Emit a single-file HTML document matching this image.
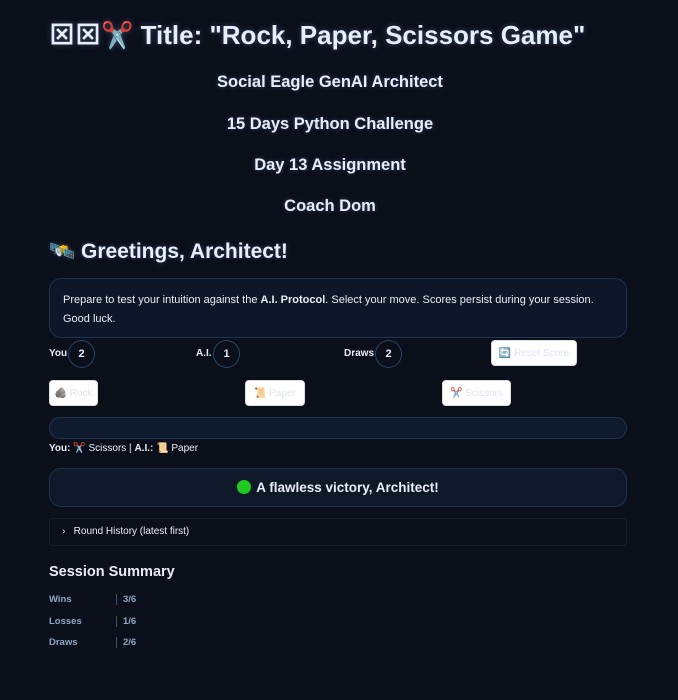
<!DOCTYPE html>
<html><head><meta charset="utf-8"><style>
*{margin:0;padding:0;box-sizing:border-box}
body{width:678px;height:700px;background:#0b0f1a;color:#e8eef8;font-family:"Liberation Sans","Noto Sans CJK JP",sans-serif;position:relative;overflow:hidden}
.a{position:absolute}
.h1{left:49px;top:15px;font-size:26px;font-weight:bold;white-space:nowrap;text-shadow:0 0 6px rgba(140,180,255,.35)}
.sub{left:0;width:660px;text-align:center;font-size:16.5px;font-weight:bold;text-shadow:0 0 5px rgba(140,180,255,.3)}
.box{left:49px;width:578px;border:1px solid #1e3352;border-radius:12px;background:#0e1728}
.lbl{font-size:10px;font-weight:bold;color:#e8eef8}
.pill{width:27px;height:28px;border:1px solid #24446a;border-radius:50%;font-size:11px;font-weight:bold;text-align:center;line-height:26px}
.btn{background:#fff;border-radius:4px;border:1px solid #ddd;color:#dfe6f0;font-size:10px;text-align:center;line-height:25px;height:26px;white-space:nowrap}
.sl{font-size:9.5px;font-weight:bold;color:#8fa6c6}
.sv{left:116px;border-left:1px solid #3b5270;padding-left:6px;font-size:9.5px;font-weight:bold;color:#8fa6c6;height:11px;line-height:11px}
</style></head><body>
<div class="a h1">⊠⊠✂️ Title: "Rock, Paper, Scissors Game"</div>
<div class="a sub" style="top:73px">Social Eagle GenAI Architect</div>
<div class="a sub" style="top:115px">15 Days Python Challenge</div>
<div class="a sub" style="top:156px">Day 13 Assignment</div>
<div class="a sub" style="top:197px">Coach Dom</div>
<div class="a" style="left:49px;top:240px;font-size:21px;font-weight:bold;white-space:nowrap;text-shadow:0 0 5px rgba(140,180,255,.3)">🛰️ Greetings, Architect!</div>
<div class="a box" style="top:278px;height:60px;padding:12px 13px;font-size:11px;line-height:19px;color:#e8eef8">Prepare to test your intuition against the <b>A.I. Protocol</b>. Select your move. Scores persist during your session. Good luck.</div>
<div class="a lbl" style="left:49px;top:348px">You</div><div class="a pill" style="left:68px;top:340px">2</div>
<div class="a lbl" style="left:196px;top:348px">A.I.</div><div class="a pill" style="left:213px;top:340px">1</div>
<div class="a lbl" style="left:344px;top:348px">Draws</div><div class="a pill" style="left:375px;top:340px">2</div>
<div class="a btn" style="left:491px;top:340px;width:86px">🔄 Reset Score</div>
<div class="a btn" style="left:49px;top:380px;width:49px">🪨 Rock</div>
<div class="a btn" style="left:245px;top:380px;width:60px">📜 Paper</div>
<div class="a btn" style="left:442px;top:380px;width:69px">✂️ Scissors</div>
<div class="a box" style="top:417px;height:22px;border-radius:11px;background:#0e1a2c"></div>
<div class="a" style="left:49px;top:443px;font-size:10px;white-space:nowrap"><b>You:</b> ✂️ Scissors | <b>A.I.:</b> 📜 Paper</div>
<div class="a box" style="top:468px;height:39px;text-align:center;line-height:37px;font-size:13.5px;font-weight:bold;background:#0f1829"><span style="display:inline-block;width:14px;height:14px;border-radius:50%;background:#1fc91f;vertical-align:-2px;margin-right:5px"></span>A flawless victory, Architect!</div>
<div class="a box" style="top:518px;height:28px;background:#0b0f1a;border-color:#161e2c;border-radius:4px;font-size:10px;line-height:26px;padding-left:12px">›&nbsp;&nbsp;&nbsp;Round History (latest first)</div>
<div class="a" style="left:49px;top:564px;font-size:14.5px;font-weight:bold">Session Summary</div>
<div class="a sl" style="left:49px;top:594px">Wins</div><div class="a sv" style="top:594px">3/6</div>
<div class="a sl" style="left:49px;top:616px">Losses</div><div class="a sv" style="top:616px">1/6</div>
<div class="a sl" style="left:49px;top:637px">Draws</div><div class="a sv" style="top:637px">2/6</div>
</body></html>
